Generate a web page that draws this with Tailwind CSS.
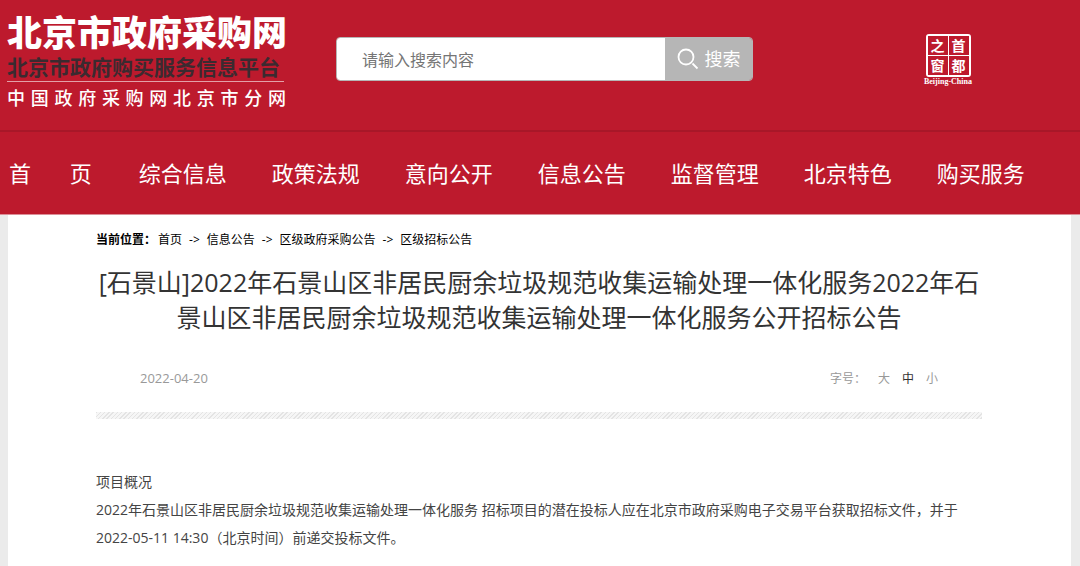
<!DOCTYPE html>
<html lang="zh-CN">
<head>
    <meta charset="UTF-8">
    <meta name="viewport" content="width=device-width, initial-scale=1.0">
    <title>北京市政府采购网</title>
    <script src="https://cdn.jsdelivr.net/npm/@tailwindcss/browser@4"></script>
</head>
<body class="bg-[#ebebeb] font-['Open_Sans','Noto_Sans_CJK_SC',sans-serif] text-[#333]">
    <header class="bg-[#bd1a2d] text-white border-b border-[#dc8f98]">
        <!-- 顶部：标志、搜索 -->
        <div class="flex items-start h-[130px] px-[7px]">
            <a href="#" class="block w-[277px] pt-[10px] whitespace-nowrap">
                <span class="block text-[35px] leading-[42px] font-black font-['Noto_Sans_CJK_SC',sans-serif]">北京市政府采购网</span>
                <span class="block text-[21px] leading-[28px] font-bold text-[#3b2a30] font-['Noto_Sans_CJK_SC',sans-serif]">北京市政府购买服务信息平台</span>
                <span class="block border-t border-[#e3a0a8] mt-[1px] pt-1 text-[18px] leading-[26px] font-medium font-['DejaVu_Sans','Noto_Sans_CJK_SC',sans-serif]">中 国 政 府 采 购 网 北 京 市 分 网</span>
            </a>
            <form class="flex w-[417px] h-11 mt-[37px] ml-[52px] rounded border border-[#b6b6b6] overflow-hidden" onsubmit="return false">
                <input type="text" aria-label="搜索内容" placeholder="请输入搜索内容" class="flex-1 min-w-0 bg-white pl-[25px] pt-[2px] text-base text-[#333] placeholder:text-[#757575] outline-none">
                <button type="submit" class="flex items-center justify-center gap-[6px] w-[87px] bg-[#b6b6b6] text-[18px] text-white">
                    <svg class="w-[22px] h-[22px]" viewBox="0 0 22 22" fill="none" stroke="currentColor" stroke-width="1.8">
                        <circle cx="9" cy="9" r="7.5"/>
                        <path d="M15.5 15.5l5 5"/>
                    </svg>
                    搜索
                </button>
            </form>
            <a href="#" class="flex flex-col items-center w-[50px] mt-[34px] ml-[170px]">
                <span class="grid grid-cols-2 gap-[1px] w-[45px] h-[43px] rounded-[3px] border-2 border-white bg-white font-['Noto_Sans_CJK_SC',sans-serif] text-[14px] leading-[19px] font-bold text-center">
                    <span class="bg-[#bd1a2d]">之</span>
                    <span class="bg-[#bd1a2d]">首</span>
                    <span class="bg-[#bd1a2d]">窗</span>
                    <span class="bg-[#bd1a2d]">都</span>
                </span>
                <span class="text-[8px] leading-[9px] font-bold whitespace-nowrap font-['Liberation_Serif',serif]">Beijing-China</span>
            </a>
        </div>
        <!-- 主导航 -->
        <nav class="flex gap-[45px] h-[84px] pl-[9px] border-t-2 border-[#a81728] text-[22px] leading-[82px] whitespace-nowrap">
            <a href="#" class="mr-[2px]">首&emsp;&ensp;&nbsp;页</a>
            <a href="#">综合信息</a>
            <a href="#">政策法规</a>
            <a href="#">意向公开</a>
            <a href="#">信息公告</a>
            <a href="#">监督管理</a>
            <a href="#">北京特色</a>
            <a href="#">购买服务</a>
        </nav>
    </header>

    <main class="ml-2 mr-[9px] pl-22 pr-[89px] pt-4 pb-4 bg-white">
        <div class="flex gap-[2px] text-[12px] leading-[18px] text-black">
            <b>当前位置：</b>
            <div class="flex gap-[7px]">
                <a href="#">首页</a>
                <span>-&gt;</span>
                <a href="#">信息公告</a>
                <span>-&gt;</span>
                <a href="#">区级政府采购公告</a>
                <span>-&gt;</span>
                <a href="#">区级招标公告</a>
            </div>
        </div>

        <h1 class="mt-4 text-[25px] leading-[35px] text-center">[石景山]2022年石景山区非居民厨余垃圾规范收集运输处理一体化服务2022年石景山区非居民厨余垃圾规范收集运输处理一体化服务公开招标公告</h1>

        <div class="flex justify-between mt-[33px] px-11 text-[#999] leading-[20px]">
            <time class="text-[13px]">2022-04-20</time>
            <div class="flex gap-3 pt-[1px] text-[12px]">
                <span>字号：</span>
                <button type="button">大</button>
                <button type="button" class="text-[#333]">中</button>
                <button type="button">小</button>
            </div>
        </div>

        <div class="h-[7px] mt-[23px] bg-[repeating-linear-gradient(135deg,#e4e4e4_0_1px,#f6f6f6_1px_3px)]"></div>

        <div class="mt-[49px] text-[14px] leading-[28px] text-[#444]">
            <p>项目概况</p>
            <p>2022年石景山区非居民厨余垃圾规范收集运输处理一体化服务 招标项目的潜在投标人应在北京市政府采购电子交易平台获取招标文件，并于2022-05-11 14:30（北京时间）前递交投标文件。</p>
        </div>
    </main>
</body>
</html>
